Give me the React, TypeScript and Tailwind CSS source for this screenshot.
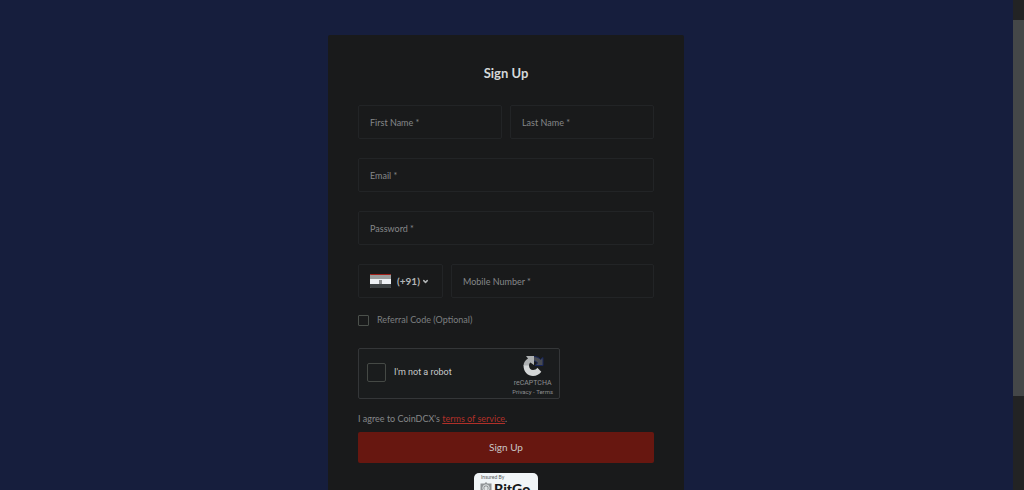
import type { InputHTMLAttributes } from "react";
import { ChevronDown } from "lucide-react";

function Field({ label, ...rest }: { label: string } & InputHTMLAttributes<HTMLInputElement>) {
  return (
    <input
      aria-label={label}
      placeholder={`${label} *`}
      className="block h-[34px] w-full min-w-0 rounded-xs border border-[#222426] bg-transparent px-[11px] text-[9px] text-[#c8caca] outline-none placeholder:text-[#858789] placeholder:opacity-100"
      {...rest}
    />
  );
}

function IndiaFlag() {
  return (
    <svg width="21" height="14" viewBox="0 0 21 14" aria-hidden="true">
      <rect width="21" height="14" rx="1" fill="#999b9b" />
      <path d="M0 1a1 1 0 0 1 1-1h19a1 1 0 0 1 1 1H0Z" fill="#a3201a" />
      <rect y="5" width="21" height="5" fill="#eef1f5" />
      <rect x="9" y="6" width="3" height="4" fill="#8c8f91" />
      <path d="M0 10h21v3a1 1 0 0 1-1 1H1a1 1 0 0 1-1-1Z" fill="#3c4143" />
    </svg>
  );
}

function RecaptchaLogo() {
  return (
    <svg width="22" height="22" viewBox="0 0 22 22" aria-hidden="true">
      <path d="M11 1.500C14.500 1.500 17 2.500 18.500 4.500L21 2.500V10.500H13L15.500 8C14.500 6.500 13.500 6 11 6Z" fill="#484b52" stroke="#18265a" strokeWidth="1" />
      <path d="M12 1H4L6 3.500C3 5 1.500 8 1.500 11H7C7 9.500 7.300 8.500 8.300 7.500L12 10Z" fill="#aeb1b2" />
      <path d="M1.500 10.500C1.500 17 6 21 11 21C14.500 21 17.500 19.300 19.300 16.800L15.300 12.800C14.500 14.400 13 15 11 15C8.600 15 7 13.200 7 10.500Z" fill="#d4d7d7" />
    </svg>
  );
}

function BitGoBadge() {
  return (
    <div className="mx-auto mt-[10px] h-8 w-16 rounded-[5px] bg-[#f1f5f7] px-[6px] pt-[2px] text-[#17191b]">
      <p className="pl-px text-[5px] leading-[5px] text-[#55595b]">Insured By</p>
      <div className="flex items-start gap-[2px]">
        <svg className="mt-[2px] shrink-0" width="12" height="14" viewBox="0 0 12 14" aria-hidden="true">
          <path d="M6 0 7.500 1.500H11.500V8C11.500 11 9 12.500 6 14C3 12.500 .5 11 .5 8V1.500H4.500Z" fill="#909496" />
          <circle cx="6" cy="6" r="3.200" fill="none" stroke="#e1e5e6" />
          <path d="M4.500 8V5.500L6 4L7.500 5.500V8Z" fill="#e1e5e6" />
        </svg>
        <p className="text-[14px] leading-[17px] font-black">BitGo</p>
      </div>
    </div>
  );
}

export default function App() {
  return (
    <div className="flex h-screen overflow-hidden bg-[#161e3d] font-['Lato','Liberation_Sans',sans-serif]">
      <main className="min-w-0 flex-1 overflow-hidden pt-[35px] pr-[17px] pl-4">
        <form
          onSubmit={(event) => event.preventDefault()}
          className="mx-auto min-h-screen w-full max-w-[356px] rounded-xs bg-[#191a1b] px-[30px] pt-[29px] text-[9px]"
        >
          <h1 className="text-center text-[13px] leading-[18px] font-bold text-[#d4d8d9]">Sign Up</h1>
          <div className="mt-[23px] flex flex-col gap-[19px]">
            <div className="grid grid-cols-2 gap-2">
              <Field label="First Name" />
              <Field label="Last Name" />
            </div>
            <Field label="Email" type="email" />
            <Field label="Password" type="password" />
            <div className="flex gap-2">
              <button
                type="button"
                aria-label="Country code +91"
                className="flex h-[34px] w-[85px] shrink-0 items-center rounded-xs border border-[#222426] pl-[11px] text-[10px] font-bold text-[#b2b5b6]"
              >
                <IndiaFlag />
                <span className="ml-[6px]">(+91)</span>
                <ChevronDown className="ml-[2px]" size={7} strokeWidth={5} />
              </button>
              <Field label="Mobile Number" type="tel" />
            </div>
          </div>

          <label className="mt-[14px] flex items-center gap-2 leading-4 text-[#7c7f80]">
            <input type="checkbox" className="size-[11px] appearance-none rounded-[1px] border border-[#4b504b] checked:bg-[#6f7273]" />
            Referral Code (Optional)
          </label>

          <div className="mt-5 flex h-[51px] w-[202px] items-center justify-between rounded-xs border border-[#343638] bg-[#1a1c1d] pr-[6px] pl-2">
            <label className="flex items-center gap-2 pb-[2px] font-[Roboto,sans-serif] text-[#c8cbcc]">
              <input type="checkbox" className="size-[19px] appearance-none rounded-xs border border-[#454945] checked:bg-[#6f7273]" />
              I&apos;m not a robot
            </label>
            <div className="flex flex-col items-center pt-1 font-[Roboto,sans-serif] text-[#8c8e90]">
              <RecaptchaLogo />
              <p className="mt-[2px] text-[7px] leading-[9px]">reCAPTCHA</p>
              <p className="text-[6px] leading-[8px]">
                <a href="#privacy">Privacy</a> - <a href="#terms">Terms</a>
              </p>
            </div>
          </div>

          <p className="mt-3 leading-4 text-[#858789]">
            I agree to CoinDCX&apos;s{" "}
            <a href="#terms-of-service" className="text-[#b03029] underline">terms of service</a>.
          </p>
          <button type="submit" className="mt-[5px] h-[31px] w-full rounded-xs bg-[#671710] text-[10px] text-[#c8c6c5]">
            Sign Up
          </button>
          <BitGoBadge />
        </form>
      </main>
      <div aria-hidden="true" className="flex w-[11px] shrink-0 flex-col bg-[#222324] pt-5">
        <div className="h-[80%] bg-[#444748]" />
      </div>
    </div>
  );
}
